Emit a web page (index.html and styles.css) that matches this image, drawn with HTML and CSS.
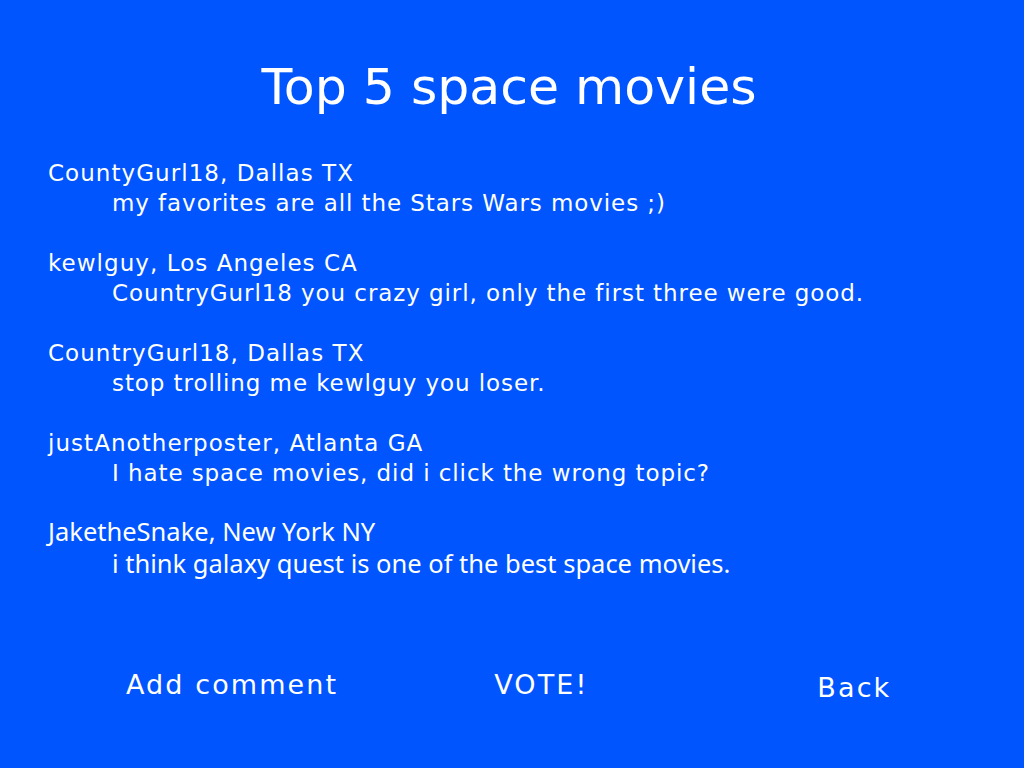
FILE: index.html
```html
<!DOCTYPE html>
<html lang="en">
<head>
<meta charset="utf-8">
<title>Top 5 space movies</title>
<link rel="stylesheet" href="styles.css">
</head>
<body>
<main class="page">
  <h1 class="title">Top 5 space movies</h1>
  <section class="comments">
    <div class="comment">
      <div class="author">CountyGurl18, Dallas TX</div>
      <div class="text">my favorites are all the Stars Wars movies ;)</div>
    </div>
    <div class="comment">
      <div class="author">kewlguy, Los Angeles CA</div>
      <div class="text">CountryGurl18 you crazy girl, only the first three were good.</div>
    </div>
    <div class="comment">
      <div class="author">CountryGurl18, Dallas TX</div>
      <div class="text">stop trolling me kewlguy you loser.</div>
    </div>
    <div class="comment">
      <div class="author">justAnotherposter, Atlanta GA</div>
      <div class="text">I hate space movies, did i click the wrong topic?</div>
    </div>
    <div class="comment comment-alt">
      <div class="author">JaketheSnake, New York NY</div>
      <div class="text">i think galaxy quest is one of the best space movies.</div>
    </div>
  </section>
  <nav class="actions">
    <span class="action action-add">Add comment</span>
    <span class="action action-vote">VOTE!</span>
    <span class="action action-back">Back</span>
  </nav>
</main>
</body>
</html>
```

FILE: styles.css
```css
html, body {
  margin: 0;
  padding: 0;
  background: #0055ff;
}
body {
  width: 1024px;
  height: 768px;
  overflow: hidden;
  color: #ffffff;
  font-family: "DejaVu Sans", sans-serif;
}
.page {
  display: flex;
  flex-direction: column;
  padding-top: 57px;
}
.title {
  margin: 0;
  padding-right: 6px;
  font-size: 50.5px;
  font-weight: normal;
  line-height: 60px;
  text-align: center;
}
.comments {
  display: flex;
  flex-direction: column;
  gap: 30px;
  margin-top: 41px;
  padding-left: 48px;
}
.comment {
  font-size: 23px;
  letter-spacing: 0.92px;
  line-height: 30px;
}
.author {
  letter-spacing: 1.05px;
}
.text {
  padding-left: 64px;
}
.comment-alt {
  margin-top: -3px;
  font-family: "Noto Sans", sans-serif;
  font-size: 25.5px;
  line-height: 32px;
}
.comment-alt .author,
.comment-alt .text {
  letter-spacing: 0;
}
.actions {
  display: flex;
  align-items: flex-start;
  margin-top: 90px;
  padding-left: 126px;
  font-size: 27px;
  letter-spacing: 2.1px;
  line-height: 32px;
}
.action-vote {
  margin-left: 156px;
}
.action-back {
  margin-left: 229px;
  margin-top: 3px;
}
```
